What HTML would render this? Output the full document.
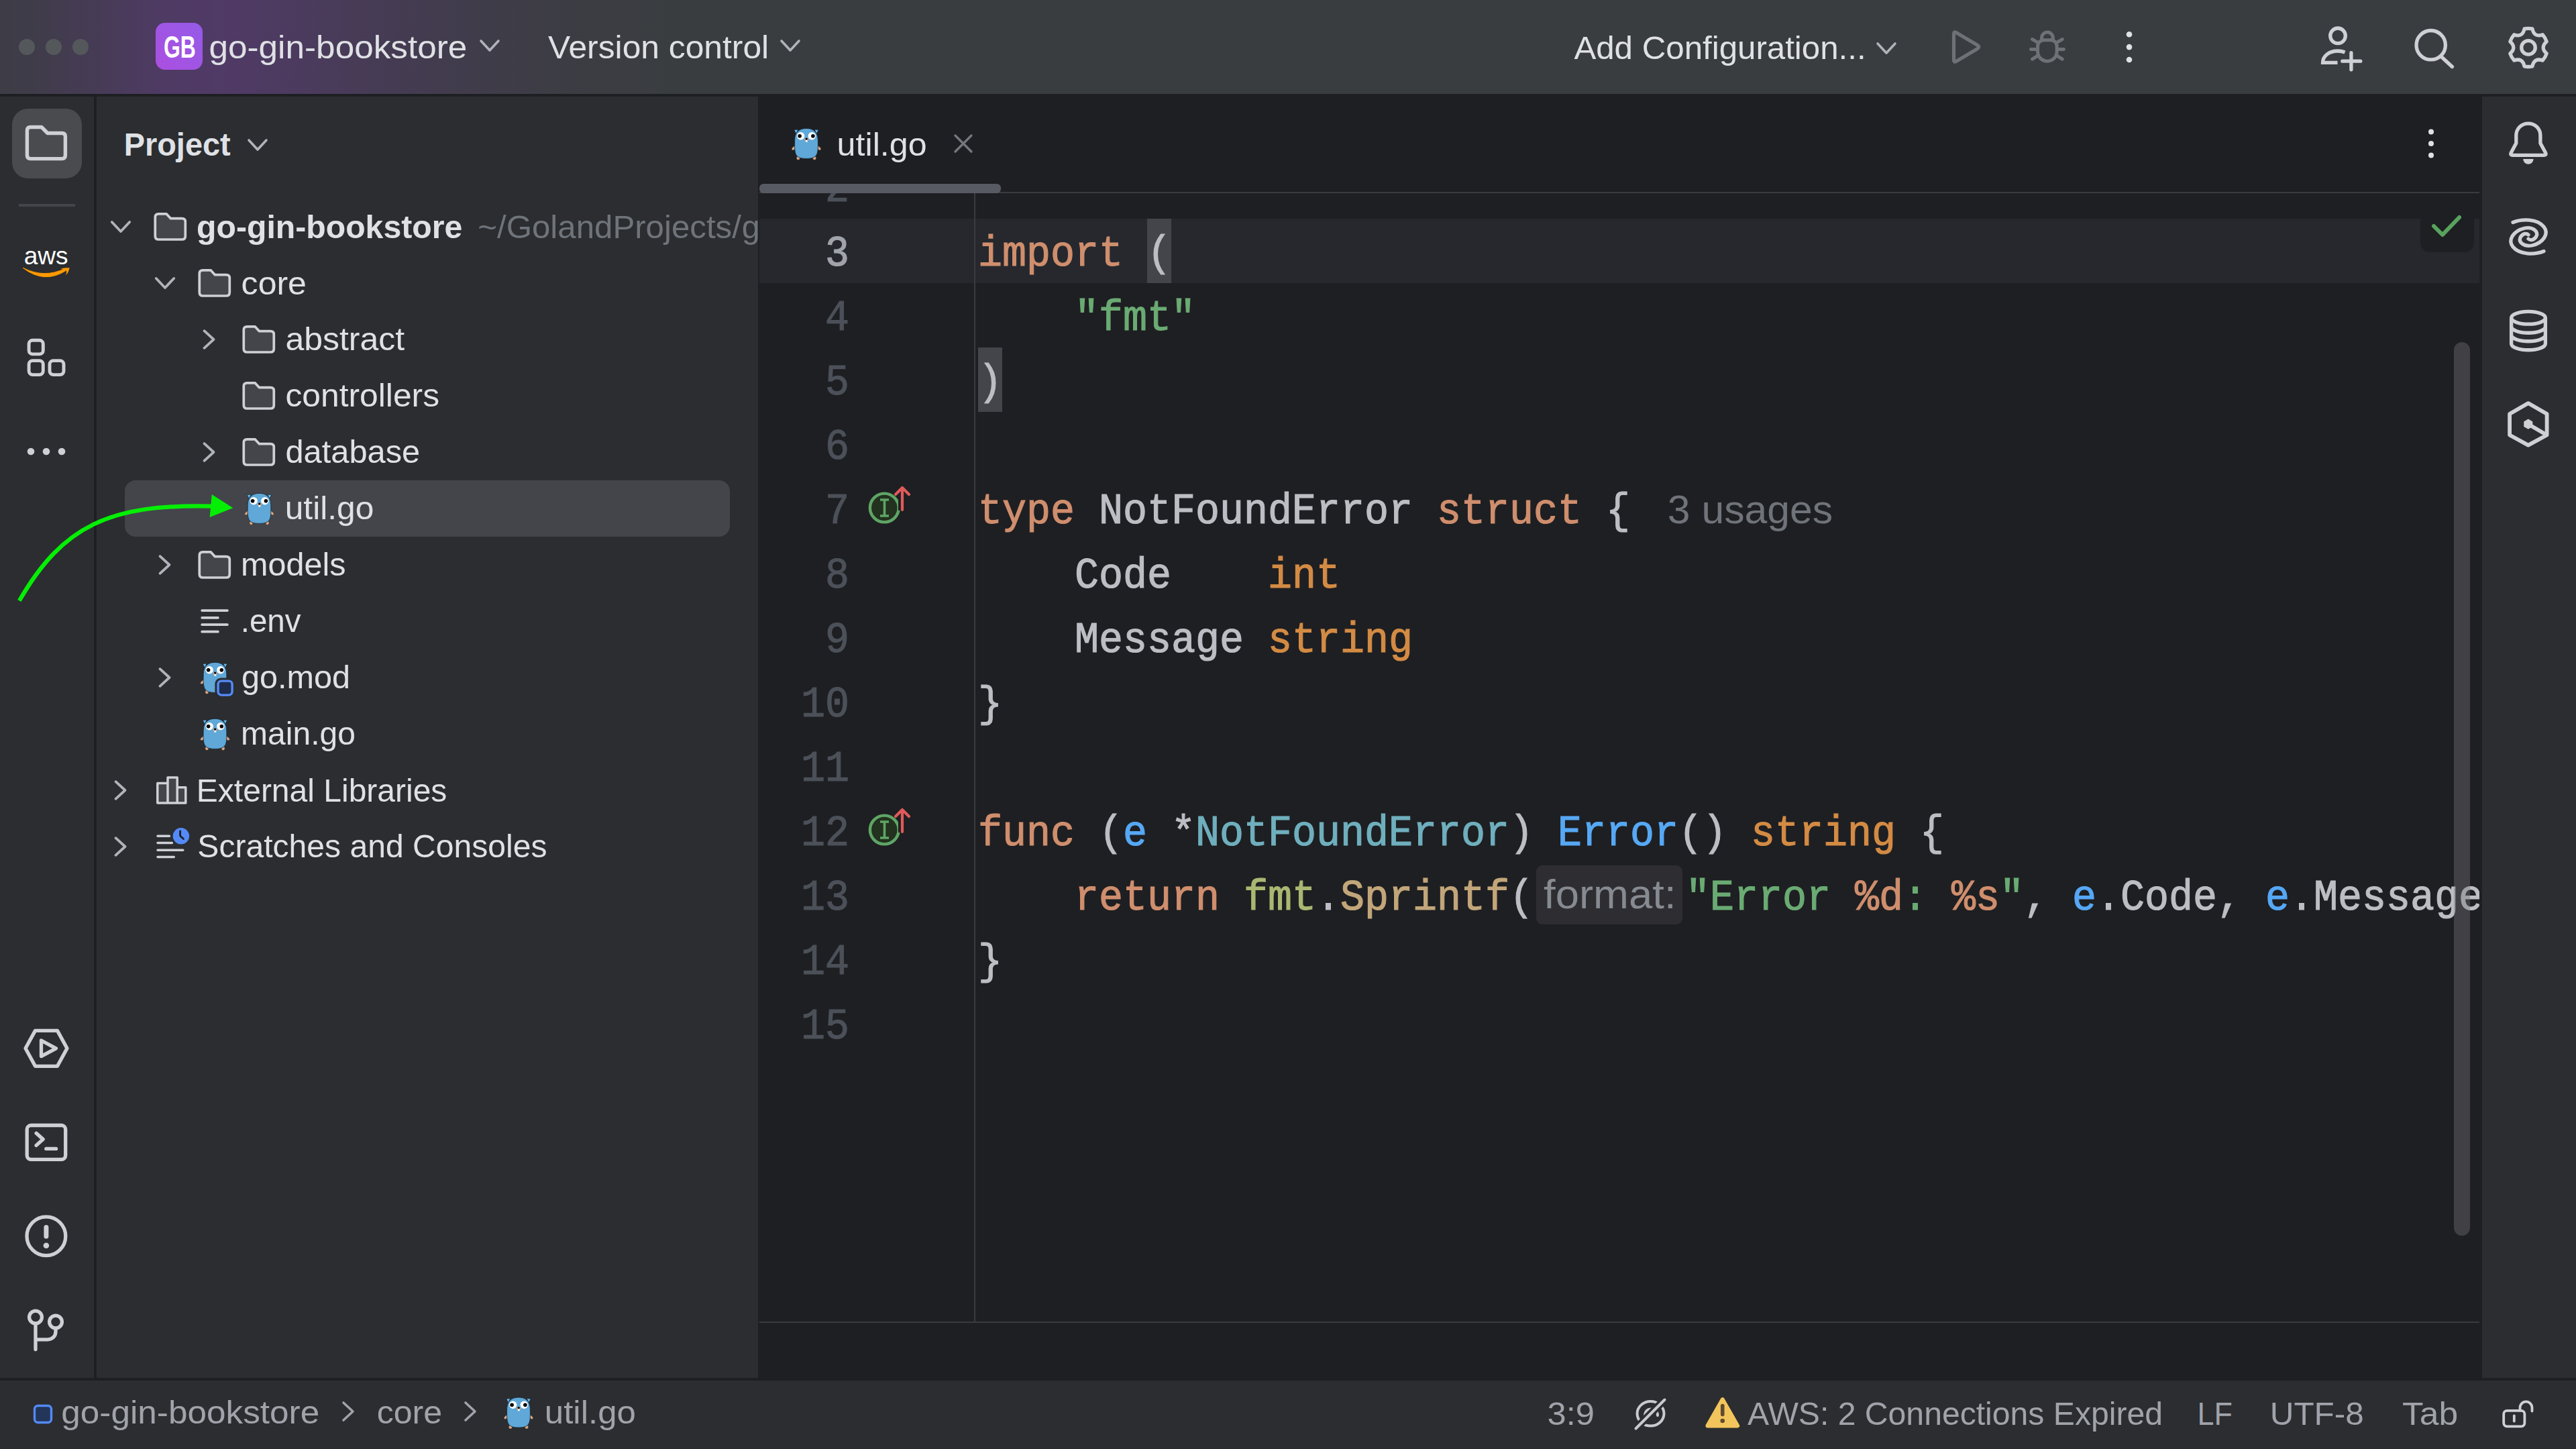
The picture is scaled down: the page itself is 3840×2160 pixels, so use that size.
<!DOCTYPE html>
<html><head><meta charset="utf-8">
<style>
html,body{margin:0;padding:0;width:3840px;height:2160px;overflow:hidden;background:#1e1f22;}
body{position:relative;font-family:"Liberation Sans",sans-serif;}
.p{position:absolute;}
#title{left:0;top:0;width:3840px;height:140px;background:#3a3d40;}
#tgrad{left:0;top:0;width:1400px;height:140px;background:linear-gradient(90deg,rgba(80,58,102,0.15) 0px,rgba(80,58,102,0.25) 50px,rgba(80,58,102,0.55) 140px,rgba(80,58,102,0.9) 230px,rgba(80,58,102,1) 330px,rgba(80,58,102,0.8) 440px,rgba(80,58,102,0.5) 580px,rgba(80,58,102,0.22) 740px,rgba(80,58,102,0.06) 880px,rgba(80,58,102,0) 1000px);}
#ltb{left:0;top:144px;width:140px;height:1910px;background:#2b2d30;}
#proj{left:144px;top:144px;width:986px;height:1910px;background:#2b2d30;}
#editor{left:1130px;top:144px;width:2570px;height:1914px;background:#1e1f22;}
#rtb{left:3700px;top:144px;width:140px;height:1910px;background:#2b2d30;}
#status{left:0;top:2058px;width:3840px;height:102px;background:#2b2d30;}
svg.o{position:absolute;left:0;top:0;}
.code{font-family:"Liberation Mono",monospace;font-size:60px;white-space:pre;stroke-width:1.1px;}
</style></head>
<body>
<div class="p" id="title"></div>
<div class="p" id="tgrad"></div>
<div class="p" id="ltb"></div>
<div class="p" id="proj"></div>
<div class="p" id="editor"></div>
<div class="p" id="rtb"></div>
<div class="p" id="status"></div>
<svg class="o" width="3840" height="2160" viewBox="0 0 3840 2160" font-family="Liberation Sans, sans-serif">
<defs>
  <linearGradient id="gbg" x1="0" y1="1" x2="1" y2="0">
    <stop offset="0" stop-color="#ab4fe0"/><stop offset="1" stop-color="#955be8"/>
  </linearGradient>
  <symbol id="gopher" viewBox="-4 -4 44 54" overflow="visible">
    <path d="M-0.8 2.2 L5.2 1.6 L2.4 8.2 Z M35.8 2.2 L29.8 1.6 L32.6 8.2 Z" fill="#6ab7e6" stroke="#14202a" stroke-width="0.7" stroke-linejoin="round"/>
    <ellipse cx="-0.6" cy="29.2" rx="2.3" ry="4.4" fill="#dca784" stroke="#1a1a1a" stroke-width="0.5" transform="rotate(50 -0.6 29.2)"/>
    <ellipse cx="35.6" cy="29.2" rx="2.3" ry="4.4" fill="#dca784" stroke="#1a1a1a" stroke-width="0.5" transform="rotate(-50 35.6 29.2)"/>
    <ellipse cx="5.4" cy="44.2" rx="2.6" ry="2.9" fill="#dca784" stroke="#1a1a1a" stroke-width="0.5"/>
    <ellipse cx="29.6" cy="44.2" rx="2.6" ry="2.9" fill="#dca784" stroke="#1a1a1a" stroke-width="0.5"/>
    <path d="M17.5 0 C28.5 0 34.6 6 34.8 17 C35 27 35.2 34 33 38.8 C30.5 43.8 25 45 17.5 45 C10 45 4.5 43.8 2 38.8 C-0.2 34 0 27 0.2 17 C0.4 6 6.5 0 17.5 0 Z" fill="#5fa8d8" stroke="#16222c" stroke-width="0.8"/>
    <circle cx="9.2" cy="11.3" r="5.7" fill="#fff"/><circle cx="25.8" cy="11.3" r="5.7" fill="#fff"/>
    <circle cx="7.6" cy="11.3" r="2.8" fill="#000"/><circle cx="27.4" cy="11.3" r="2.8" fill="#000"/>
    <ellipse cx="17.7" cy="16.4" rx="3.2" ry="2" fill="#d9a886"/>
    <ellipse cx="17.7" cy="15.6" rx="1.7" ry="1.5" fill="#000"/>
    <rect x="16.4" y="17.7" width="2.8" height="2.6" fill="#fff"/>
  </symbol>
  <clipPath id="projclip"><rect x="144" y="144" width="986" height="1910"/></clipPath>
  <clipPath id="edclip"><rect x="1132" y="288" width="2564" height="1682"/></clipPath>
</defs>

<g fill="#54585b"><circle cx="40" cy="70" r="12"/><circle cx="80" cy="70" r="12"/><circle cx="120" cy="70" r="12"/></g>
<rect x="232" y="34" width="70" height="70" rx="14" fill="url(#gbg)"/>
<text x="0" y="86" font-size="47" fill="#fff" transform="translate(244 0) scale(0.68 1)" font-weight="bold">GB</text>
<text x="311.41" y="86.5" font-size="49" fill="#dfe1e5" textLength="384.99" lengthAdjust="spacingAndGlyphs">go-gin-bookstore</text>
<path d="M717 61 L730 75 L743 61" fill="none" stroke="#b0b3b9" stroke-width="3.6" stroke-linecap="round" stroke-linejoin="round"/>
<text x="817.00" y="87" font-size="49" fill="#dfe1e5" textLength="329.17" lengthAdjust="spacingAndGlyphs">Version control</text>
<path d="M1165 61 L1178 75 L1191 61" fill="none" stroke="#b0b3b9" stroke-width="3.6" stroke-linecap="round" stroke-linejoin="round"/>
<text x="2346.40" y="88.2" font-size="49" fill="#dfe1e5" textLength="435.23" lengthAdjust="spacingAndGlyphs">Add Configuration...</text>
<path d="M2799 65 L2812 79 L2825 65" fill="none" stroke="#b0b3b9" stroke-width="3.6" stroke-linecap="round" stroke-linejoin="round"/>
<path d="M2916 48.5 Q2912.5 46.5 2912.5 50.5 V89.5 Q2912.5 93.5 2916 91.5 L2948 72.5 Q2951.5 70 2948 67.5 Z" fill="none" stroke="#6e7175" stroke-width="5.2" stroke-linejoin="round"/>
<g fill="none" stroke="#6e7175" stroke-width="5" stroke-linecap="round" stroke-linejoin="round">
<path d="M3043.5 59 V56.5 A8.4 8.4 0 0 1 3060.3 56.5 V59"/>
<path d="M3047 59.7 H3056.8 C3062 59.7 3066.1 63.5 3066.1 69 V77 C3066.1 85 3059.8 91.2 3051.9 91.2 C3044 91.2 3037.6 85 3037.6 77 V69 C3037.6 63.5 3041.8 59.7 3047 59.7 Z"/>
<path d="M3029.6 58.6 L3037.4 63.1 M3027.5 73.6 H3036 M3029.6 88.1 L3037.4 83.2 M3074.2 58.6 L3066.4 63.1 M3076.3 73.6 H3067.8 M3074.2 88.1 L3066.4 83.2"/>
</g>
<g fill="#dfe1e5"><circle cx="3174" cy="51.3" r="4.3"/><circle cx="3174" cy="70.1" r="4.3"/><circle cx="3174" cy="89" r="4.3"/></g>
<g fill="none" stroke="#ced0d6" stroke-width="5.3" stroke-linecap="round">
<circle cx="3485" cy="53.3" r="11.3"/>
<path d="M3495.5 78 C3492 76.5 3489 76 3485 76 C3471 76 3462.5 84 3462.5 93.4 H3484.5" stroke-linecap="butt"/>
<path d="M3504.9 78.7 V103.8 M3491.8 91.2 H3518.8"/>
</g>
<g fill="none" stroke="#ced0d6" stroke-width="5.3" stroke-linecap="round">
<circle cx="3623.7" cy="67.2" r="21.7"/><path d="M3640 85.3 L3655.4 99.5"/></g>
<path d="M3763.05 42.92 A28.6 28.6 0 0 1 3774.95 42.92 Q3777.60 56.00 3790.25 51.76 A28.6 28.6 0 0 1 3796.20 62.06 Q3786.20 70.90 3796.20 79.74 A28.6 28.6 0 0 1 3790.25 90.04 Q3777.60 85.80 3774.95 98.88 A28.6 28.6 0 0 1 3763.05 98.88 Q3760.40 85.80 3747.75 90.04 A28.6 28.6 0 0 1 3741.80 79.74 Q3751.80 70.90 3741.80 62.06 A28.6 28.6 0 0 1 3747.75 51.76 Q3760.40 56.00 3763.05 42.92 Z" fill="none" stroke="#ced0d6" stroke-width="5.3" stroke-linejoin="round"/>
<circle cx="3769" cy="70.9" r="10.3" fill="none" stroke="#ced0d6" stroke-width="5.3"/>
<rect x="18" y="162" width="104" height="104" rx="24" fill="#4a4b4e"/>
<path d="M45.5 189.5 H62 L70.9 198.5 H92.4 Q97.4 198.5 97.4 203.5 V231.6 Q97.4 236.6 92.4 236.6 H45.4 Q40.4 236.6 40.4 231.6 V194.5 Q40.4 189.5 45.5 189.5 Z" fill="none" stroke="#ced0d6" stroke-width="5.4" stroke-linejoin="round"/>
<rect x="28" y="304" width="84" height="4" fill="#43454a"/>
<text x="35.71" y="393.7" font-size="37.5" fill="#ffffff" textLength="65.97" lengthAdjust="spacingAndGlyphs">aws</text>
<path d="M34 399.2 Q66 424 98.5 403.2 L97 400.3 Q66 415.5 34 399.2 Z" fill="#ff9900" stroke="#ff9900" stroke-width="1" stroke-linejoin="round"/>
<path d="M90.3 400.6 Q97 398.8 103.8 399.3 Q102.5 405 98.6 410.5 Q99.5 405.5 98.8 402.8 Q94.5 401.2 90.3 400.6 Z" fill="#ff9900"/>
<g fill="none" stroke="#ced0d6" stroke-width="4.9">
<rect x="43.1" y="507.3" width="21.2" height="20.6" rx="5.5"/>
<rect x="43.1" y="537.6" width="21.2" height="21" rx="5.5"/>
<rect x="74" y="537.6" width="21" height="21" rx="5.5"/></g>
<g fill="#ced0d6"><circle cx="46" cy="673" r="5.3"/><circle cx="69" cy="673" r="5.3"/><circle cx="92" cy="673" r="5.3"/></g>
<g fill="none" stroke="#ced0d6" stroke-width="5.3" stroke-linejoin="round" stroke-linecap="round">
<path d="M52.5 1536.4 H85.5 L100 1562.8 L85.5 1589.3 H52.5 L38 1562.8 Z"/>
<path d="M61.5 1551 L83.5 1562.8 L61.5 1574.6 Z"/>
<rect x="40.2" y="1677.5" width="57.5" height="50.8" rx="6"/>
<path d="M54.1 1689.2 L64.2 1698.3 L54.1 1707.4 M68.8 1712.4 H83.6"/>
<circle cx="68.9" cy="1842.7" r="28.9"/>
<path d="M68.9 1829.5 V1843" stroke-width="7"/>
<path d="M53 1973 V2011.5 M53 1996.8 H71 C78 1996.8 83 1991.8 83 1985 V1980"/>
<circle cx="53" cy="1963.5" r="9.4"/><circle cx="83" cy="1970.6" r="9.4"/>
</g>
<circle cx="68.9" cy="1856.8" r="4.3" fill="#ced0d6"/>
<text x="184.67" y="232" font-size="48" font-weight="bold" fill="#dfe1e5" textLength="159.07" lengthAdjust="spacingAndGlyphs">Project</text>
<path d="M371 209 L384 223 L397 209" fill="none" stroke="#b0b3b9" stroke-width="3.6" stroke-linecap="round" stroke-linejoin="round"/>
<rect x="186" y="716" width="902" height="84" rx="16" fill="#43454a"/>
<g clip-path="url(#projclip)">
<path d="M166.8 331 L180 345 L193.2 331" fill="none" stroke="#b0b3b9" stroke-width="3.8" stroke-linecap="round" stroke-linejoin="round"/>
<path d="M236.3 318.9 H248.3 L254.5 325.7 H271.3 Q276.3 325.7 276.3 330.7 V352 Q276.3 357 271.3 357 H236.3 Q231.3 357 231.3 352 V323.9 Q231.3 318.9 236.3 318.9 Z" fill="#43454a" stroke="#ced0d6" stroke-width="3.7" stroke-linejoin="round"/>
<text x="293.01" y="355.3" font-size="48.5" font-weight="bold" fill="#dfe1e5" textLength="396.31" lengthAdjust="spacingAndGlyphs">go-gin-bookstore</text>
<text x="712.27" y="355.3" font-size="48.5" fill="#6f737a" textLength="392.60" lengthAdjust="spacingAndGlyphs">~/GolandProjects/</text>
<text x="1105.70" y="355.3" font-size="48.5" fill="#6f737a">go-gin-bookstore</text>
<path d="M232.8 415 L246 429 L259.2 415" fill="none" stroke="#b0b3b9" stroke-width="3.8" stroke-linecap="round" stroke-linejoin="round"/>
<path d="M302.3 402.9 H314.3 L320.5 409.7 H337.3 Q342.3 409.7 342.3 414.7 V436 Q342.3 441 337.3 441 H302.3 Q297.3 441 297.3 436 V407.9 Q297.3 402.9 302.3 402.9 Z" fill="#43454a" stroke="#ced0d6" stroke-width="3.7" stroke-linejoin="round"/>
<text x="359.64" y="438.7" font-size="48.5" fill="#dfe1e5" textLength="97.30" lengthAdjust="spacingAndGlyphs">core</text>
<path d="M304.5 493.2 L318.5 506 L304.5 518.8" fill="none" stroke="#b0b3b9" stroke-width="3.8" stroke-linecap="round" stroke-linejoin="round"/>
<path d="M368.3 486.9 H380.3 L386.5 493.7 H403.3 Q408.3 493.7 408.3 498.7 V520 Q408.3 525 403.3 525 H368.3 Q363.3 525 363.3 520 V491.9 Q363.3 486.9 368.3 486.9 Z" fill="#43454a" stroke="#ced0d6" stroke-width="3.7" stroke-linejoin="round"/>
<text x="425.44" y="521.9" font-size="48.5" fill="#dfe1e5" textLength="177.68" lengthAdjust="spacingAndGlyphs">abstract</text>
<path d="M368.3 570.9 H380.3 L386.5 577.7 H403.3 Q408.3 577.7 408.3 582.7 V604 Q408.3 609 403.3 609 H368.3 Q363.3 609 363.3 604 V575.9 Q363.3 570.9 368.3 570.9 Z" fill="#43454a" stroke="#ced0d6" stroke-width="3.7" stroke-linejoin="round"/>
<text x="425.45" y="606.2" font-size="48.5" fill="#dfe1e5" textLength="229.63" lengthAdjust="spacingAndGlyphs">controllers</text>
<path d="M304.5 661.2 L318.5 674 L304.5 686.8" fill="none" stroke="#b0b3b9" stroke-width="3.8" stroke-linecap="round" stroke-linejoin="round"/>
<path d="M368.3 654.9 H380.3 L386.5 661.7 H403.3 Q408.3 661.7 408.3 666.7 V688 Q408.3 693 403.3 693 H368.3 Q363.3 693 363.3 688 V659.9 Q363.3 654.9 368.3 654.9 Z" fill="#43454a" stroke="#ced0d6" stroke-width="3.7" stroke-linejoin="round"/>
<text x="425.49" y="690" font-size="48.5" fill="#dfe1e5" textLength="200.70" lengthAdjust="spacingAndGlyphs">database</text>
<use href="#gopher" x="365" y="731.4" width="44" height="54"/>
<text x="424.73" y="774.2" font-size="48.5" fill="#dfe1e5" textLength="132.63" lengthAdjust="spacingAndGlyphs">util.go</text>
<path d="M238.5 829.2 L252.5 842 L238.5 854.8" fill="none" stroke="#b0b3b9" stroke-width="3.8" stroke-linecap="round" stroke-linejoin="round"/>
<path d="M302.3 822.9 H314.3 L320.5 829.7 H337.3 Q342.3 829.7 342.3 834.7 V856 Q342.3 861 337.3 861 H302.3 Q297.3 861 297.3 856 V827.9 Q297.3 822.9 302.3 822.9 Z" fill="#43454a" stroke="#ced0d6" stroke-width="3.7" stroke-linejoin="round"/>
<text x="359.00" y="858" font-size="48.5" fill="#dfe1e5" textLength="156.57" lengthAdjust="spacingAndGlyphs">models</text>
<g stroke="#ced0d6" stroke-width="3.8" stroke-linecap="round"><path d="M301.2 910.1 H338.9 M301.2 920.8 H324.9 M301.2 931.1 H338.9 M301.2 941.7 H324.9"/></g>
<text x="358.67" y="942" font-size="48.5" fill="#dfe1e5" textLength="90.01" lengthAdjust="spacingAndGlyphs">.env</text>
<path d="M238.5 997.2 L252.5 1010 L238.5 1022.8" fill="none" stroke="#b0b3b9" stroke-width="3.8" stroke-linecap="round" stroke-linejoin="round"/>
<use href="#gopher" x="299" y="983.4" width="44" height="54"/>
<rect x="320.4" y="1010.4" width="30.4" height="30.4" rx="9" fill="#2b2d30"/>
<rect x="325.1" y="1015.1" width="21" height="21" rx="5" fill="#1f2b4a" stroke="#548af7" stroke-width="3.4"/>
<text x="359.99" y="1026" font-size="48.5" fill="#dfe1e5" textLength="162.19" lengthAdjust="spacingAndGlyphs">go.mod</text>
<use href="#gopher" x="299" y="1067.4" width="44" height="54"/>
<text x="359.03" y="1110" font-size="48.5" fill="#dfe1e5" textLength="170.90" lengthAdjust="spacingAndGlyphs">main.go</text>
<path d="M172.5 1165.2 L186.5 1178 L172.5 1190.8" fill="none" stroke="#b0b3b9" stroke-width="3.8" stroke-linecap="round" stroke-linejoin="round"/>
<g fill="#43454a" stroke="#ced0d6" stroke-width="3.5" stroke-linejoin="round"><path d="M234.8 1167.5 H250 V1197 H234.8 Z M250 1159 H264.2 V1197 H250 Z M264.2 1173.8 H276.8 V1197 H264.2 Z"/></g>
<text x="292.84" y="1194.5" font-size="48.5" fill="#dfe1e5" textLength="373.54" lengthAdjust="spacingAndGlyphs">External Libraries</text>
<path d="M172.5 1249.2 L186.5 1262 L172.5 1274.8" fill="none" stroke="#b0b3b9" stroke-width="3.8" stroke-linecap="round" stroke-linejoin="round"/>
<g stroke="#ced0d6" stroke-width="3.5" stroke-linecap="round"><path d="M235 1246.3 H252.5 M235 1256.4 H256.5 M235 1267.2 H272.8 M235 1277.6 H259.3"/></g>
<circle cx="269.9" cy="1246.3" r="15.2" fill="#2b2d30"/><circle cx="269.9" cy="1246.3" r="12.2" fill="#548af7"/><path d="M268.6 1239 V1246 L273.5 1250.5" fill="none" stroke="#1e1f22" stroke-width="2.8" stroke-linecap="round" stroke-linejoin="round"/>
<text x="294.32" y="1278.3" font-size="48.5" fill="#dfe1e5" textLength="521.29" lengthAdjust="spacingAndGlyphs">Scratches and Consoles</text>
</g>
<path d="M28.8 895.5 C93.8 782.9 164 751 316 754.7" fill="none" stroke="#05ef05" stroke-width="6.2" stroke-linecap="butt"/>
<path d="M347.4 757.2 L315.7 737 L312.7 770.9 Z" fill="#05ef05"/>
<use href="#gopher" x="1180.5" y="187.4" width="44" height="54"/>
<text x="1247.63" y="232" font-size="49" fill="#dfe1e5" textLength="133.98" lengthAdjust="spacingAndGlyphs">util.go</text>
<path d="M1424 202 L1448 226 M1448 202 L1424 226" stroke="#74787e" stroke-width="3.4" stroke-linecap="round"/>
<g fill="#dfe1e5"><circle cx="3624" cy="196.5" r="4"/><circle cx="3624" cy="214" r="4"/><circle cx="3624" cy="231.5" r="4"/></g>
<rect x="1132" y="286" width="2564" height="2" fill="#393b40"/>
<rect x="1132" y="274" width="360" height="14" rx="6" fill="#575a62"/>
<g clip-path="url(#edclip)">
<rect x="1132" y="326" width="2564" height="96" fill="#26282e"/>
<rect x="1452" y="288" width="2" height="1682" fill="#393b40"/>
<rect x="1710" y="326" width="36" height="96" fill="#43454a"/>
<rect x="1458" y="518" width="36" height="96" fill="#43454a"/>
<path d="M3608 288 H3688 V360 Q3688 376 3672 376 H3624 Q3608 376 3608 360 Z" fill="#1e1f22"/>
<path d="M3628 337 L3641 350 L3666 324" fill="none" stroke="#58a35e" stroke-width="6" stroke-linecap="round" stroke-linejoin="round"/>
<text class="code" x="1266" y="299.8" fill="#4b5059" stroke="#4b5059" text-anchor="end" transform="matrix(1 0 0 1.07 0 -20.99)">2</text>
<text class="code" x="1266" y="395.8" fill="#a1a3ab" stroke="#a1a3ab" text-anchor="end" transform="matrix(1 0 0 1.07 0 -27.71)">3</text>
<text class="code" x="1458" y="395.8" transform="matrix(1 0 0 1.07 0 -27.71)"><tspan fill="#cf8e6d" stroke="#cf8e6d">import </tspan><tspan fill="#bcbec4" stroke="#bcbec4">(</tspan></text>
<text class="code" x="1266" y="491.8" fill="#4b5059" stroke="#4b5059" text-anchor="end" transform="matrix(1 0 0 1.07 0 -34.43)">4</text>
<text class="code" x="1458" y="491.8" transform="matrix(1 0 0 1.07 0 -34.43)"><tspan fill="#bcbec4" stroke="#bcbec4">    </tspan><tspan fill="#6aab73" stroke="#6aab73">&quot;fmt&quot;</tspan></text>
<text class="code" x="1266" y="587.8" fill="#4b5059" stroke="#4b5059" text-anchor="end" transform="matrix(1 0 0 1.07 0 -41.15)">5</text>
<text class="code" x="1458" y="587.8" transform="matrix(1 0 0 1.07 0 -41.15)"><tspan fill="#bcbec4" stroke="#bcbec4">)</tspan></text>
<text class="code" x="1266" y="683.8" fill="#4b5059" stroke="#4b5059" text-anchor="end" transform="matrix(1 0 0 1.07 0 -47.87)">6</text>
<text class="code" x="1266" y="779.8" fill="#4b5059" stroke="#4b5059" text-anchor="end" transform="matrix(1 0 0 1.07 0 -54.59)">7</text>
<text class="code" x="1458" y="779.8" transform="matrix(1 0 0 1.07 0 -54.59)"><tspan fill="#cf8e6d" stroke="#cf8e6d">type </tspan><tspan fill="#bcbec4" stroke="#bcbec4">NotFoundError </tspan><tspan fill="#cf8e6d" stroke="#cf8e6d">struct </tspan><tspan fill="#bcbec4" stroke="#bcbec4">{</tspan></text>
<text class="code" x="1266" y="875.8" fill="#4b5059" stroke="#4b5059" text-anchor="end" transform="matrix(1 0 0 1.07 0 -61.31)">8</text>
<text class="code" x="1458" y="875.8" transform="matrix(1 0 0 1.07 0 -61.31)"><tspan fill="#bcbec4" stroke="#bcbec4">    Code    </tspan><tspan fill="#d38b44" stroke="#d38b44">int</tspan></text>
<text class="code" x="1266" y="971.8" fill="#4b5059" stroke="#4b5059" text-anchor="end" transform="matrix(1 0 0 1.07 0 -68.03)">9</text>
<text class="code" x="1458" y="971.8" transform="matrix(1 0 0 1.07 0 -68.03)"><tspan fill="#bcbec4" stroke="#bcbec4">    Message </tspan><tspan fill="#d38b44" stroke="#d38b44">string</tspan></text>
<text class="code" x="1266" y="1067.8" fill="#4b5059" stroke="#4b5059" text-anchor="end" transform="matrix(1 0 0 1.07 0 -74.75)">10</text>
<text class="code" x="1458" y="1067.8" transform="matrix(1 0 0 1.07 0 -74.75)"><tspan fill="#bcbec4" stroke="#bcbec4">}</tspan></text>
<text class="code" x="1266" y="1163.8" fill="#4b5059" stroke="#4b5059" text-anchor="end" transform="matrix(1 0 0 1.07 0 -81.47)">11</text>
<text class="code" x="1266" y="1259.8" fill="#4b5059" stroke="#4b5059" text-anchor="end" transform="matrix(1 0 0 1.07 0 -88.19)">12</text>
<text class="code" x="1458" y="1259.8" transform="matrix(1 0 0 1.07 0 -88.19)"><tspan fill="#cf8e6d" stroke="#cf8e6d">func </tspan><tspan fill="#bcbec4" stroke="#bcbec4">(</tspan><tspan fill="#56a8f5" stroke="#56a8f5">e</tspan><tspan fill="#bcbec4" stroke="#bcbec4"> *</tspan><tspan fill="#6fafbd" stroke="#6fafbd">NotFoundError</tspan><tspan fill="#bcbec4" stroke="#bcbec4">) </tspan><tspan fill="#56a8f5" stroke="#56a8f5">Error</tspan><tspan fill="#bcbec4" stroke="#bcbec4">() </tspan><tspan fill="#d38b44" stroke="#d38b44">string</tspan><tspan fill="#bcbec4" stroke="#bcbec4"> {</tspan></text>
<text class="code" x="1266" y="1355.8" fill="#4b5059" stroke="#4b5059" text-anchor="end" transform="matrix(1 0 0 1.07 0 -94.91)">13</text>
<text class="code" x="1458" y="1355.8" transform="matrix(1 0 0 1.07 0 -94.91)"><tspan fill="#bcbec4" stroke="#bcbec4">    </tspan><tspan fill="#cf8e6d" stroke="#cf8e6d">return </tspan><tspan fill="#a9b772" stroke="#a9b772">fmt</tspan><tspan fill="#bcbec4" stroke="#bcbec4">.</tspan><tspan fill="#c2a67a" stroke="#c2a67a">Sprintf</tspan><tspan fill="#bcbec4" stroke="#bcbec4">(</tspan></text>
<text class="code" x="1266" y="1451.8" fill="#4b5059" stroke="#4b5059" text-anchor="end" transform="matrix(1 0 0 1.07 0 -101.63)">14</text>
<text class="code" x="1458" y="1451.8" transform="matrix(1 0 0 1.07 0 -101.63)"><tspan fill="#bcbec4" stroke="#bcbec4">}</tspan></text>
<text class="code" x="1266" y="1547.8" fill="#4b5059" stroke="#4b5059" text-anchor="end" transform="matrix(1 0 0 1.07 0 -108.35)">15</text>
<text x="2485.78" y="780.2" font-size="60" fill="#6f737a" textLength="246.46" lengthAdjust="spacingAndGlyphs">3 usages</text>
<rect x="2290" y="1290" width="218" height="88" rx="9" fill="#2d2d32"/>
<text x="2301.00" y="1354" font-size="61" fill="#868a91" textLength="197.52" lengthAdjust="spacingAndGlyphs">format:</text>
<text class="code" x="2513" y="1355.8" transform="matrix(1 0 0 1.07 0 -94.91)"><tspan fill="#6aab73" stroke="#6aab73">&quot;Error </tspan><tspan fill="#cf8e6d" stroke="#cf8e6d">%d</tspan><tspan fill="#6aab73" stroke="#6aab73">: </tspan><tspan fill="#cf8e6d" stroke="#cf8e6d">%s</tspan><tspan fill="#6aab73" stroke="#6aab73">&quot;</tspan><tspan fill="#bcbec4" stroke="#bcbec4">, </tspan><tspan fill="#56a8f5" stroke="#56a8f5">e</tspan><tspan fill="#bcbec4" stroke="#bcbec4">.Code, </tspan><tspan fill="#56a8f5" stroke="#56a8f5">e</tspan><tspan fill="#bcbec4" stroke="#bcbec4">.Message)</tspan></text>
<g><circle cx="1318.3" cy="757" r="21.4" fill="#22321f" stroke="#5fa566" stroke-width="4.4"/><path d="M1312 745 H1325 M1312 769 H1325 M1318.5 745 V769" stroke="#5fa566" stroke-width="3.6"/><path d="M1345 726 L1345 761" stroke="#1e1f22" stroke-width="12"/><path d="M1345 727 V760 M1335 737 L1345 727 L1355 737" fill="none" stroke="#e05a5a" stroke-width="4.2" stroke-linecap="round" stroke-linejoin="round"/></g>
<g><circle cx="1318.3" cy="1237" r="21.4" fill="#22321f" stroke="#5fa566" stroke-width="4.4"/><path d="M1312 1225 H1325 M1312 1249 H1325 M1318.5 1225 V1249" stroke="#5fa566" stroke-width="3.6"/><path d="M1345 1206 L1345 1241" stroke="#1e1f22" stroke-width="12"/><path d="M1345 1207 V1240 M1335 1217 L1345 1207 L1355 1217" fill="none" stroke="#e05a5a" stroke-width="4.2" stroke-linecap="round" stroke-linejoin="round"/></g>
<rect x="3658" y="510" width="24" height="1332" rx="12" fill="rgb(117,118,122)" fill-opacity="0.4"/>
</g>
<rect x="1132" y="1970" width="2564" height="2" fill="#393b40"/>
<g fill="none" stroke="#ced0d6" stroke-width="5.3" stroke-linejoin="round" stroke-linecap="round">
<path d="M3750.8 213.4 V202 C3750.8 191.5 3758.8 184.1 3768.9 184.1 C3779 184.1 3786.9 191.5 3786.9 202 V213.4 L3794.5 227.5 Q3796.5 231.3 3792.5 231.3 H3745.3 Q3741.3 231.3 3743.3 227.5 Z"/>
</g>
<path d="M3761.2 236.9 H3776.6 A7.7 7.9 0 0 1 3761.2 236.9 Z" fill="#ced0d6"/>
<g fill="none" stroke="#ced0d6" stroke-width="5.3" stroke-linecap="round">
<path d="M3746 331.5 C3760 326 3782 326 3792 338 C3800 348 3792 362 3774 366 C3762 368 3754 361 3757 354 C3760 348 3766 347 3769 350"/>
<path d="M3792 374.5 C3778 380 3756 380 3746 368 C3738 358 3746 344 3764 340 C3776 338 3784 345 3781 352 C3778 358 3772 359 3769 356"/>
</g>
<g fill="none" stroke="#ced0d6" stroke-width="5.3">
<ellipse cx="3769" cy="473.8" rx="25.4" ry="9.4"/>
<path d="M3743.6 473.8 V512.4 A25.4 9.4 0 0 0 3794.4 512.4 V473.8 M3743.6 486.9 A25.4 9.4 0 0 0 3794.4 486.9 M3743.6 499.4 A25.4 9.4 0 0 0 3794.4 499.4"/>
</g>
<g fill="none" stroke="#ced0d6" stroke-width="5.8" stroke-linejoin="round" stroke-linecap="round">
<path d="M3768.8 601.1 L3796.6 616.9 L3796.6 648.5 L3768.8 663.6 L3741.1 648.5 L3741.1 616.9 Z"/>
<path d="M3768.8 632.2 L3794 647"/></g>
<path d="M3768.8 625.5 L3774.6 628.8 L3774.6 635.6 L3768.8 638.9 L3763 635.6 L3763 628.8 Z" fill="#ced0d6" stroke="#ced0d6" stroke-width="1.5" stroke-linejoin="round"/>
<rect x="51.5" y="2095.5" width="25" height="25" rx="5" fill="#233558" stroke="#548af7" stroke-width="3.4"/>
<text x="91.31" y="2122" font-size="49" fill="#a0a3aa" textLength="384.89" lengthAdjust="spacingAndGlyphs">go-gin-bookstore</text>
<path d="M512 2091 L526 2104 L512 2117" fill="none" stroke="#a0a3aa" stroke-width="3.6" stroke-linecap="round" stroke-linejoin="round"/>
<text x="561.65" y="2122" font-size="49" fill="#a0a3aa" textLength="97.53" lengthAdjust="spacingAndGlyphs">core</text>
<path d="M694 2091 L708 2104 L694 2117" fill="none" stroke="#a0a3aa" stroke-width="3.6" stroke-linecap="round" stroke-linejoin="round"/>
<use href="#gopher" x="751.5" y="2079" width="44" height="54"/>
<text x="811.88" y="2122" font-size="49" fill="#a0a3aa" textLength="135.95" lengthAdjust="spacingAndGlyphs">util.go</text>
<text x="2306.64" y="2124" font-size="49" fill="#a0a3aa" textLength="70.25" lengthAdjust="spacingAndGlyphs">3:9</text>
<g fill="none" stroke="#c8cad0" stroke-width="4" stroke-linecap="round">
<ellipse cx="2460.5" cy="2107.3" rx="20" ry="18.3"/>
<path d="M2452 2111 C2452 2104 2456 2100.5 2461 2100.5 C2467 2100.5 2471 2104 2471 2110"/>
</g>
<path d="M2436 2132 L2484 2084" stroke="#2b2d30" stroke-width="11"/>
<path d="M2438.5 2129.5 L2481.5 2086.5" stroke="#c8cad0" stroke-width="4" stroke-linecap="round"/>
<path d="M2567.75 2086.3 L2590 2125.3 L2545.5 2125.3 Z" fill="#f2c55c" stroke="#f2c55c" stroke-width="6.2" stroke-linejoin="round"/>
<path d="M2567.75 2095.5 V2108.5" stroke="#5e4b30" stroke-width="5.6" stroke-linecap="round"/><circle cx="2567.75" cy="2118" r="3.3" fill="#5e4b30"/>
<text x="2605.10" y="2124" font-size="49" fill="#a0a3aa" textLength="618.89" lengthAdjust="spacingAndGlyphs">AWS: 2 Connections Expired</text>
<text x="3275.44" y="2124" font-size="49" fill="#a0a3aa" textLength="52.35" lengthAdjust="spacingAndGlyphs">LF</text>
<text x="3383.78" y="2124" font-size="49" fill="#a0a3aa" textLength="139.97" lengthAdjust="spacingAndGlyphs">UTF-8</text>
<text x="3580.95" y="2124" font-size="49" fill="#a0a3aa" textLength="83.17" lengthAdjust="spacingAndGlyphs">Tab</text>
<g fill="none" stroke="#ced0d6" stroke-width="3.8" stroke-linecap="round" stroke-linejoin="round">
<rect x="3732.2" y="2102.9" width="31.2" height="23.4" rx="5"/>
<path d="M3756.5 2102.5 V2098.4 A9 9 0 0 1 3774.5 2098.4 V2103.5"/>
<path d="M3747.8 2110.5 V2118.5"/></g>
</svg>
</body></html>
